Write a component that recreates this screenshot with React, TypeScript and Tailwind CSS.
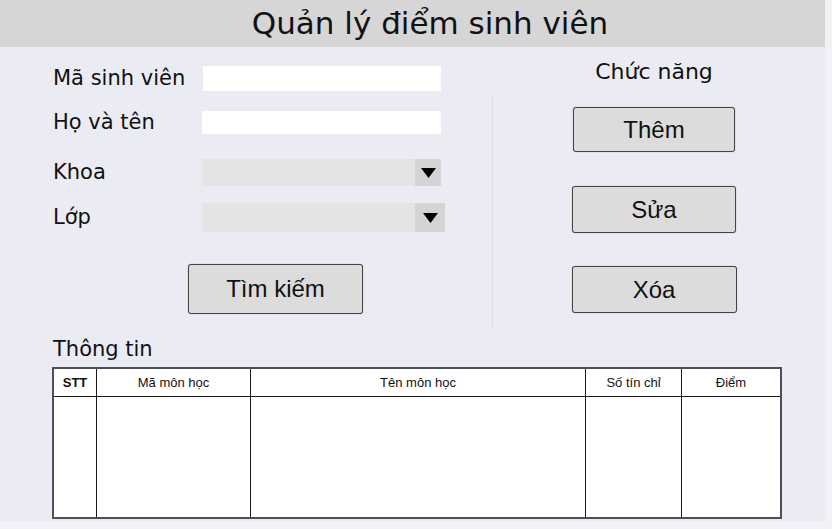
import type { JSX } from "react";

const SANS = "font-['DejaVu_Sans',sans-serif]";
const ARIAL = "font-['Liberation_Sans',Arial,sans-serif]";

interface Column {
  title: string;
  /** Width includes the 1px left rule of every column after the first. */
  width: string;
  bold?: boolean;
}

const COLUMNS: Column[] = [
  { title: "STT", width: "w-[42px]", bold: true },
  { title: "Mã môn học", width: "w-[154px]" },
  { title: "Tên môn học", width: "w-[335px]" },
  { title: "Số tín chỉ", width: "w-[96px]" },
  { title: "Điểm", width: "flex-1" },
];

function Label({ children }: { children: string }): JSX.Element {
  return <span className={`w-[149px] text-[21px] leading-[25px] text-[#111] ${SANS}`}>{children}</span>;
}

function Arrow(): JSX.Element {
  return (
    <svg width="15" height="10" viewBox="0 0 15 10" aria-hidden>
      <polygon points="0,0 15,0 7.5,10" fill="#000" />
    </svg>
  );
}

function Select({ height, width, arrowWidth }: { height: string; width: string; arrowWidth: string }): JSX.Element {
  return (
    <div className={`flex bg-[#e4e4e4] ${height} ${width}`}>
      <div className="flex-1" />
      <div className={`flex items-center justify-center bg-[#d4d4d4] ${arrowWidth}`}>
        <Arrow />
      </div>
    </div>
  );
}

function ActionButton({ children, className }: { children: string; className: string }): JSX.Element {
  return (
    <button
      type="button"
      className={`flex items-center justify-center rounded-[3px] border border-[#444] bg-[#dcdcdc] text-[24px] text-[#111] shadow-[0_0_1px_rgba(0,0,0,0.5)] ${ARIAL} ${className}`}
    >
      {children}
    </button>
  );
}

export default function App() {
  return (
    <div className="h-[529px] w-[832px] bg-[#f1f1f6]">
      <div className="flex h-[521px] w-[825px] flex-col bg-[#ebebf4]">
        {/* Title bar */}
        <header className="flex h-[47px] items-center justify-center bg-[#d6d6d6] pl-[35px]">
          <h1 className={`text-[31px] leading-none text-[#111] ${SANS}`}>Quản lý điểm sinh viên</h1>
        </header>

        <div className="flex h-[280px]">
          {/* Search form */}
          <div className="flex w-[492px] flex-col pl-[53px] pt-[19px]">
            <div className="flex h-[25px] items-center">
              <Label>Mã sinh viên</Label>
              <div className="ml-px h-[25px] w-[238px] bg-white" />
            </div>
            <div className="mt-[20px] flex h-[23px] items-center">
              <Label>Họ và tên</Label>
              <div className="h-[23px] w-[239px] bg-white" />
            </div>
            <div className="mt-[25px] flex h-[27px] items-center">
              <Label>Khoa</Label>
              <Select height="h-[27px]" width="w-[239px]" arrowWidth="w-[26px]" />
            </div>
            <div className="mt-[17px] flex h-[29px] items-center">
              <Label>Lớp</Label>
              <Select height="h-[29px]" width="w-[243px]" arrowWidth="w-[30px]" />
            </div>
            <ActionButton className="ml-[135px] mt-[32px] h-[50px] w-[175px]">Tìm kiếm</ActionButton>
          </div>

          <div className="mt-[50px] h-[230px] w-px bg-[#dcdce6]" />

          {/* Actions */}
          <div className="flex flex-1 flex-col items-center pr-[10px] pt-[12px]">
            <span className={`text-[22px] leading-[26px] text-[#111] ${SANS}`}>Chức năng</span>
            <ActionButton className="mt-[22px] h-[45px] w-[162px]">Thêm</ActionButton>
            <ActionButton className="mt-[34px] h-[47px] w-[164px]">Sửa</ActionButton>
            <ActionButton className="mt-[33px] h-[47px] w-[165px]">Xóa</ActionButton>
          </div>
        </div>

        <span className={`ml-[53px] mt-[10px] text-[21px] leading-[25px] text-[#111] ${SANS}`}>Thông tin</span>

        {/* Results table */}
        <div className="ml-[52px] mt-[5px] flex h-[152px] w-[730px] border-2 border-[#4f4f57] bg-white">
          {COLUMNS.map((col, i) => (
            <div key={col.title} className={`flex flex-col ${col.width} ${i > 0 ? "border-l border-[#1a1a1a]" : ""}`}>
              <div
                className={`flex h-[28px] items-center justify-center border-b border-[#1a1a1a] text-[13px] text-[#111] ${ARIAL} ${col.bold ? "font-bold" : "font-medium"}`}
              >
                {col.title}
              </div>
              <div className="flex-1" />
            </div>
          ))}
        </div>
      </div>
    </div>
  );
}
